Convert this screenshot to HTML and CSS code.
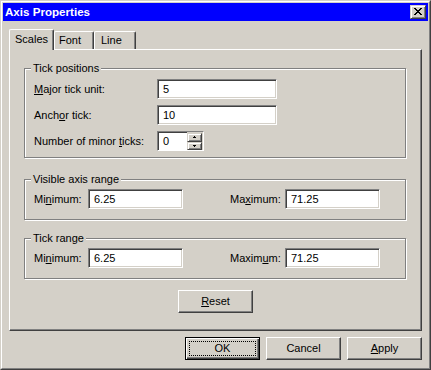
FILE: index.html
```html
<!DOCTYPE html>
<html>
<head>
<meta charset="utf-8">
<link rel="stylesheet" href="styles.css">
</head>
<body>
<div class="window">
  <div class="frame">
    <div class="titlebar">
      <span class="title">Axis Properties</span>
      <div class="close">
        <svg width="8" height="7" viewBox="0 0 8 7" shape-rendering="crispEdges"><path d="M0 0h2v1H0zM6 0h2v1H6zM1 1h2v1H1zM5 1h2v1H5zM2 2h4v1H2zM3 3h2v1H3zM2 4h4v1H2zM1 5h2v1H1zM5 5h2v1H5zM0 6h2v1H0zM6 6h2v1H6z" fill="#000"/></svg>
      </div>
    </div>
    <div class="client">
      <div class="tabs">
        <div class="tab active tab-scales">Scales</div>
        <div class="tab tab-font">Font</div>
        <div class="tab tab-line">Line</div>
      </div>
      <div class="panel">
        <div class="group g1">
          <div class="legend">Tick positions</div>
          <div class="row first">
            <span class="lbl lbl-wide"><u>M</u>ajor tick unit:</span>
            <div class="edit w120">5</div>
          </div>
          <div class="row">
            <span class="lbl lbl-wide">Anch<u>o</u>r tick:</span>
            <div class="edit w120">10</div>
          </div>
          <div class="row">
            <span class="lbl lbl-wide">Number of minor <u>t</u>icks:</span>
            <div class="spin">
              <div class="spin-val">0</div>
              <div class="spin-btns">
                <div class="spin-btn"><svg width="3" height="2" viewBox="0 0 3 2" shape-rendering="crispEdges"><path d="M1 0h1v1H1zM0 1h3v1H0z" fill="#000"/></svg></div>
                <div class="spin-btn"><svg width="3" height="2" viewBox="0 0 3 2" shape-rendering="crispEdges"><path d="M0 0h3v1H0zM1 1h1v1H1z" fill="#000"/></svg></div>
              </div>
            </div>
          </div>
        </div>

        <div class="group g2">
          <div class="legend">Visible axis range</div>
          <div class="row first">
            <span class="lbl lbl-min">Mi<u>n</u>imum:</span>
            <div class="edit w95">6.25</div>
            <span class="lbl lbl-max">Ma<u>x</u>imum:</span>
            <div class="edit w95">71.25</div>
          </div>
        </div>

        <div class="group g3">
          <div class="legend">Tick range</div>
          <div class="row first">
            <span class="lbl lbl-min">Mi<u>n</u>imum:</span>
            <div class="edit w95">6.25</div>
            <span class="lbl lbl-max">Maxim<u>u</u>m:</span>
            <div class="edit w95">71.25</div>
          </div>
        </div>

        <div class="reset-row">
          <div class="btn"><span><u>R</u>eset</span></div>
        </div>
      </div>
      <div class="buttons">
        <div class="btn default"><span class="focus">OK</span></div>
        <div class="btn"><span>Cancel</span></div>
        <div class="btn"><span><u>A</u>pply</span></div>
      </div>
    </div>
  </div>
</div>
</body>
</html>
```
FILE: styles.css
```css
html, body {
  margin: 0;
  padding: 0;
  background: #d4d0c8;
}
body {
  font-family: "Liberation Sans", Arial, sans-serif;
  font-size: 11px;
  color: #000;
}
.window {
  width: 431px;
  height: 370px;
  box-sizing: border-box;
  border: 1px solid;
  border-color: #d4d0c8 #404040 #404040 #d4d0c8;
  background: #d4d0c8;
}
.frame {
  height: 100%;
  box-sizing: border-box;
  border: 1px solid;
  border-color: #fff #808080 #808080 #fff;
  padding: 1px;
}
.titlebar {
  height: 18px;
  background: #0000ff;
  display: flex;
  align-items: center;
  padding: 0 2px;
}
.title {
  flex: 1;
  color: #fff;
  font-weight: bold;
  font-size: 11.6px;
  line-height: 14px;
}
.close {
  width: 16px;
  height: 14px;
  box-sizing: border-box;
  border: 1px solid;
  border-color: #d4d0c8 #404040 #404040 #d4d0c8;
  box-shadow: inset 1px 1px 0 #fff, inset -1px -1px 0 #808080;
  background: #d4d0c8;
  display: flex;
  justify-content: center;
  align-items: center;
  padding: 0 0 1px 0;
}
.close svg { display: block; }
.client {
  padding: 8px 6px 0 6px;
}
.tabs {
  display: flex;
  align-items: flex-end;
  height: 20px;
  position: relative;
  z-index: 1;
}
.tab {
  height: 18px;
  box-sizing: border-box;
  border-top: 1px solid #fff;
  border-left: 1px solid #fff;
  border-right: 1px solid #404040;
  box-shadow: inset -1px 0 0 #808080;
  border-radius: 2px 2px 0 0;
  background: #d4d0c8;
  line-height: 17px;
  white-space: nowrap;
}
.tab.active {
  height: 21px;
  margin-bottom: -1px;
  line-height: 19px;
}
.tab-scales { width: 45px; text-align: center; }
.tab-font { width: 40px; padding-left: 4px; }
.tab-line { width: 42px; padding-left: 6px; }
.panel {
  height: 282px;
  box-sizing: border-box;
  border: 1px solid;
  border-color: #fff #404040 #404040 #fff;
  box-shadow: inset -1px -1px 0 #808080;
  padding: 18px 15px 0 14px;
}
.group {
  border: 1px solid #808080;
  box-shadow: inset 1px 1px 0 #fff, 1px 1px 0 #fff;
  padding: 0 9px 6px 9px;
}
.g2 { margin-top: 21px; padding-bottom: 10px; }
.g3 { margin-top: 18px; padding-bottom: 10px; }
.legend {
  display: table;
  background: #d4d0c8;
  padding: 0 2px;
  margin: -7px 0 0 -3px;
  line-height: 13px;
}
.row {
  display: flex;
  align-items: center;
  height: 20px;
  margin-top: 6px;
}
.g1 .row.first { margin-top: 4px; }
.g2 .row.first, .g3 .row.first { margin-top: 3px; }
.lbl { white-space: nowrap; }
.lbl-wide { width: 123px; }
.lbl-min { width: 54px; }
.lbl-max { width: 55px; margin-left: 47px; }
.edit {
  height: 20px;
  box-sizing: border-box;
  border: 1px solid;
  border-color: #808080 #fff #fff #808080;
  box-shadow: inset 1px 1px 0 #404040, inset -1px -1px 0 #d4d0c8;
  background: #fff;
  padding-left: 5px;
  line-height: 18px;
}
.w120 { width: 120px; }
.w95 { width: 95px; }
.spin {
  width: 47px;
  height: 20px;
  box-sizing: border-box;
  border: 1px solid;
  border-color: #808080 #fff #fff #808080;
  box-shadow: inset 1px 1px 0 #404040;
  background: #fff;
  display: flex;
}
.spin-val {
  flex: 1;
  padding-left: 5px;
  line-height: 18px;
}
.spin-btns {
  width: 15px;
  display: flex;
  flex-direction: column;
  padding: 1px 1px 0 0;
  background: #d4d0c8;
}
.spin-btn {
  flex: 1;
  box-sizing: border-box;
  border: 1px solid;
  border-color: #d4d0c8 #404040 #404040 #d4d0c8;
  box-shadow: inset 1px 1px 0 #fff, inset -1px -1px 0 #808080;
  background: #d4d0c8;
  display: flex;
  justify-content: center;
  align-items: center;
}
.spin-btn svg { display: block; }
.reset-row {
  display: flex;
  justify-content: center;
  padding-left: 1px;
  margin-top: 11px;
}
.btn {
  width: 75px;
  height: 23px;
  box-sizing: border-box;
  border: 1px solid;
  border-color: #fff #404040 #404040 #fff;
  box-shadow: inset -1px -1px 0 #808080;
  background: #d4d0c8;
  display: flex;
  justify-content: center;
  align-items: center;
  line-height: 13px;
}
.btn.default {
  border-color: #000;
  box-shadow: inset 1px 1px 0 #fff, inset -1px -1px 0 #404040, inset -2px -2px 0 #808080;
  align-items: stretch;
  padding: 3px;
}
.focus {
  flex: 1;
  border: 1px dotted #000;
  display: flex;
  justify-content: center;
  align-items: center;
}
.buttons {
  display: flex;
  justify-content: flex-end;
  gap: 6px;
  margin-top: 6px;
}
```
